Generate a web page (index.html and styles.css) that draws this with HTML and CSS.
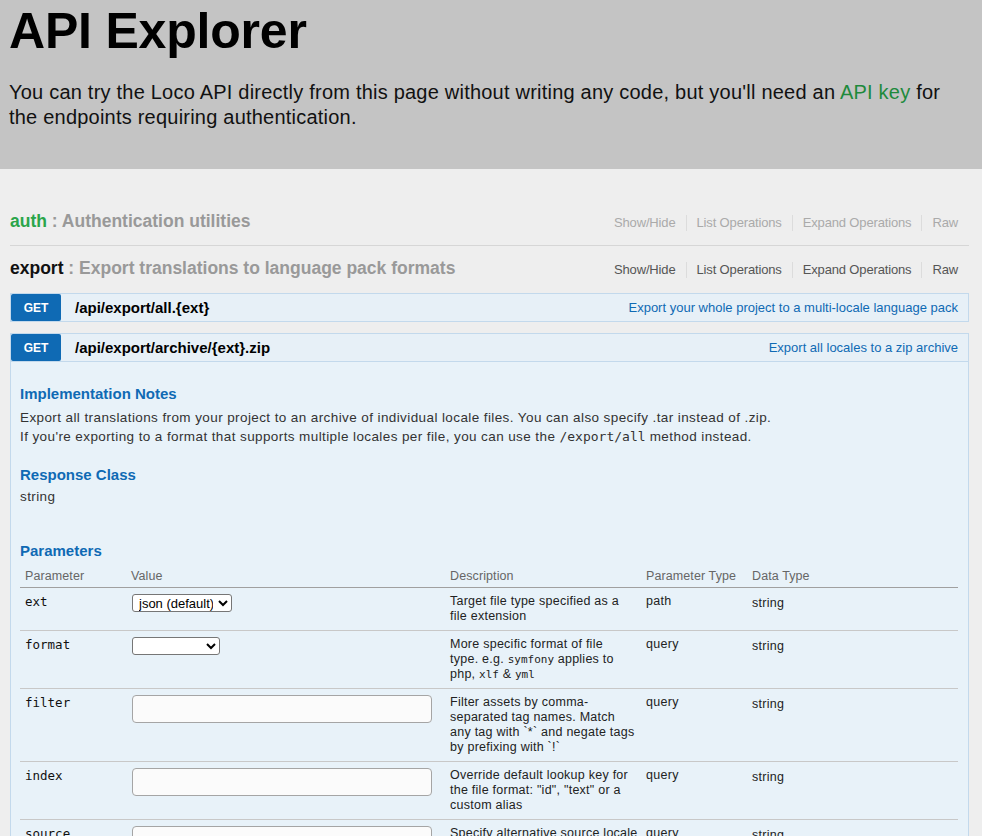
FILE: index.html
```html
<!DOCTYPE html>
<html lang="en">
<head>
<meta charset="utf-8">
<title>API Explorer</title>
<link rel="stylesheet" href="styles.css">
</head>
<body>
<header class="hero">
  <h1 class="hero-title">API Explorer</h1>
  <p class="hero-text">You can try the Loco API directly from this page without writing any code, but you'll need an <a class="hero-link" href="#">API key</a> for<br>the endpoints requiring authentication.</p>
</header>
<main class="explorer">
  <section class="resource resource-collapsed">
    <div class="resource-head">
      <h2 class="resource-title"><a class="resource-name resource-name-green" href="#">auth</a><span class="resource-desc"> : Authentication utilities</span></h2>
      <ul class="resource-links resource-links-muted">
        <li class="resource-link">Show/Hide</li>
        <li class="resource-link">List Operations</li>
        <li class="resource-link">Expand Operations</li>
        <li class="resource-link">Raw</li>
      </ul>
    </div>
  </section>
  <section class="resource">
    <div class="resource-head resource-head-open">
      <h2 class="resource-title"><a class="resource-name" href="#">export</a><span class="resource-desc"> : Export translations to language pack formats</span></h2>
      <ul class="resource-links">
        <li class="resource-link">Show/Hide</li>
        <li class="resource-link">List Operations</li>
        <li class="resource-link">Expand Operations</li>
        <li class="resource-link">Raw</li>
      </ul>
    </div>
    <div class="op">
      <div class="op-head">
        <span class="op-method">GET</span>
        <span class="op-path">/api/export/all.{ext}</span>
        <span class="op-summary">Export your whole project to a multi-locale language pack</span>
      </div>
    </div>
    <div class="op">
      <div class="op-head">
        <span class="op-method">GET</span>
        <span class="op-path">/api/export/archive/{ext}.zip</span>
        <span class="op-summary">Export all locales to a zip archive</span>
      </div>
      <div class="op-body">
        <h4 class="op-section-title op-section-first">Implementation Notes</h4>
        <p class="op-text">Export all translations from your project to an archive of individual locale files. You can also specify .tar instead of .zip.<br>If you're exporting to a format that supports multiple locales per file, you can use the <code class="code-inline">/export/all</code> method instead.</p>
        <h4 class="op-section-title op-section-gap">Response Class</h4>
        <p class="op-text op-text-tight">string</p>
        <h4 class="op-section-title op-params-title">Parameters</h4>
        <table class="params">
          <colgroup>
            <col class="col-name">
            <col class="col-value">
            <col class="col-desc">
            <col class="col-ptype">
            <col class="col-dtype">
          </colgroup>
          <thead>
            <tr>
              <th>Parameter</th>
              <th>Value</th>
              <th>Description</th>
              <th>Parameter Type</th>
              <th>Data Type</th>
            </tr>
          </thead>
          <tbody>
            <tr>
              <td class="param-name">ext</td>
              <td><select class="param-select param-select-ext"><option>json (default)</option></select></td>
              <td class="param-desc">Target file type specified as a<br>file extension</td>
              <td>path</td>
              <td class="param-dtype">string</td>
            </tr>
            <tr>
              <td class="param-name">format</td>
              <td><select class="param-select param-select-format"><option></option></select></td>
              <td class="param-desc">More specific format of file<br>type. e.g. <code class="code-small">symfony</code> applies to<br>php, <code class="code-small">xlf</code> &amp; <code class="code-small">yml</code></td>
              <td>query</td>
              <td class="param-dtype">string</td>
            </tr>
            <tr>
              <td class="param-name">filter</td>
              <td><input class="param-input" type="text"></td>
              <td class="param-desc">Filter assets by comma-<br>separated tag names. Match<br>any tag with `*` and negate tags<br>by prefixing with `!`</td>
              <td>query</td>
              <td class="param-dtype">string</td>
            </tr>
            <tr>
              <td class="param-name">index</td>
              <td><input class="param-input" type="text"></td>
              <td class="param-desc">Override default lookup key for<br>the file format: "id", "text" or a<br>custom alias</td>
              <td>query</td>
              <td class="param-dtype">string</td>
            </tr>
            <tr>
              <td class="param-name">source</td>
              <td><input class="param-input" type="text"></td>
              <td class="param-desc">Specify alternative source locale<br>instead of project default</td>
              <td>query</td>
              <td class="param-dtype">string</td>
            </tr>
          </tbody>
        </table>
      </div>
    </div>
  </section>
</main>
</body>
</html>
```
FILE: styles.css
```css
html, body {
  margin: 0;
  padding: 0;
  background: #eeeeee;
  font-family: "Liberation Sans", Arial, sans-serif;
  color: #222;
}

.hero {
  background: #c4c4c4;
  padding: 2px 10px 39px 9px;
}

.hero-title {
  margin: 0;
  font-size: 50px;
  line-height: 59px;
  font-weight: bold;
  color: #000;
  letter-spacing: -0.2px;
}

.hero-text {
  margin: 19px 0 0;
  font-size: 20px;
  line-height: 25px;
  color: #111;
  letter-spacing: 0.22px;
}

.hero-link {
  color: #1e8a3c;
  text-decoration: none;
}

.explorer {
  padding: 31px 13px 40px 10px;
}

.resource-head {
  display: flex;
  align-items: baseline;
  padding: 11px 0 13px;
}

.resource-collapsed .resource-head {
  border-bottom: 1px solid #d6d6d6;
}

.resource-head-open {
  padding-top: 12px;
  padding-bottom: 14px;
}

.resource-title {
  margin: 0;
  font-size: 17.5px;
  line-height: 21px;
  font-weight: bold;
}

.resource-name {
  color: #111;
  text-decoration: none;
}

.resource-name-green {
  color: #2aa54a;
}

.resource-desc {
  color: #999;
}

.resource-links {
  display: flex;
  list-style: none;
  margin: 0 11px 0 auto;
  padding: 0;
  font-size: 13px;
  letter-spacing: -0.15px;
  color: #555;
}

.resource-links-muted {
  color: #aaa;
}

.resource-link {
  padding: 0 10px;
  line-height: 16px;
  border-right: 1px solid #dcdcdc;
}

.resource-link:last-child {
  border-right: none;
  padding-right: 0;
}

.op {
  margin-bottom: 11px;
}

.op-head {
  display: flex;
  align-items: center;
  height: 27px;
  border: 1px solid #c3d9ec;
  background: #e7f0f7;
}

.op-method {
  align-self: stretch;
  width: 50px;
  display: flex;
  align-items: center;
  justify-content: center;
  background: #0f6ab4;
  color: #fff;
  font-size: 12px;
  font-weight: bold;
  border-radius: 2px;
}

.op-path {
  margin-left: 14px;
  font-size: 15px;
  font-weight: bold;
  color: #000;
}

.op-summary {
  margin-left: auto;
  padding-right: 10px;
  font-size: 13px;
  color: #0f6ab4;
}

.op-body {
  border: 1px solid #c3d9ec;
  border-top: none;
  background: #e8f2f9;
  padding: 23px 10px 30px 9px;
  min-height: 500px;
}

.op-section-title {
  margin: 23px 0 0;
  font-size: 15px;
  line-height: 18px;
  font-weight: bold;
  color: #0f6ab4;
}

.op-section-first {
  margin-top: 0;
}

.op-section-gap {
  margin-top: 20px;
}

.op-params-title {
  margin-top: 36px;
}

.op-text {
  margin: 5px 0 0;
  font-size: 13.5px;
  line-height: 19px;
  letter-spacing: 0.4px;
  color: #333;
}

.op-text-tight {
  margin-top: 3px;
}

.code-inline {
  font-family: "DejaVu Sans Mono", "Liberation Mono", monospace;
  font-size: 13px;
  letter-spacing: 0;
}

.code-small {
  font-family: "DejaVu Sans Mono", "Liberation Mono", monospace;
  font-size: 11px;
  letter-spacing: 0;
}

.params {
  margin-top: 5px;
  width: 938px;
  table-layout: fixed;
  border-collapse: collapse;
}

.col-name { width: 106px; }
.col-value { width: 319px; }
.col-desc { width: 196px; }
.col-ptype { width: 106px; }
.col-dtype { width: 211px; }

.params th {
  text-align: left;
  font-weight: normal;
  font-size: 12.5px;
  line-height: 15px;
  letter-spacing: 0.1px;
  color: #666;
  padding: 4px 5px 3px;
  border-bottom: 1px solid #a0a0a0;
}

.params td {
  vertical-align: top;
  font-size: 12.5px;
  line-height: 15px;
  letter-spacing: 0.3px;
  color: #222;
  padding: 6px 5px;
  border-bottom: 1px solid #c8c8c8;
}

.params td.param-desc {
  white-space: nowrap;
  letter-spacing: 0.25px;
}

.params td.param-name {
  font-family: "DejaVu Sans Mono", "Liberation Mono", monospace;
  font-size: 12.5px;
  letter-spacing: 0;
  color: #111;
}

.params td.param-dtype {
  padding-top: 8px;
  padding-bottom: 4px;
}

.param-select {
  display: block;
  margin-left: 1px;
  height: 18px;
  font-family: "Liberation Sans", Arial, sans-serif;
  font-size: 13px;
  letter-spacing: 0;
  border: 1px solid #767676;
  border-radius: 3px;
  background: #fff;
  color: #000;
  padding: 0 2px;
}

.param-select-ext { width: 100px; }
.param-select-format { width: 88px; }

.param-input {
  display: block;
  box-sizing: border-box;
  margin-left: 1px;
  width: 300px;
  height: 28px;
  border: 1px solid #a5a5a5;
  border-radius: 4px;
  background: #fbfbfb;
}
```
